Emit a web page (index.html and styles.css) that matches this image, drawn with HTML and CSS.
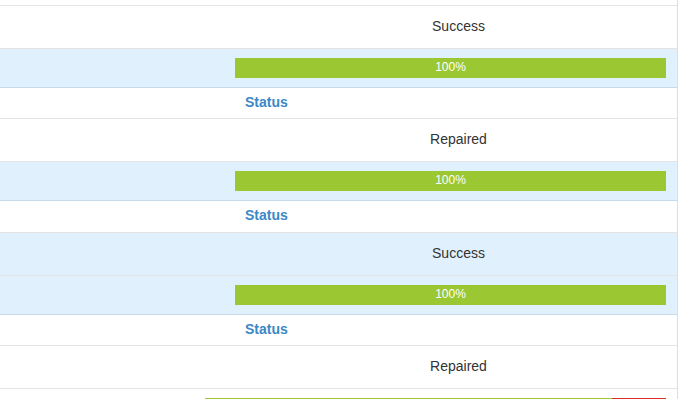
FILE: index.html
```html
<!DOCTYPE html>
<html lang="en">
<head>
    <meta charset="UTF-8">
    <meta name="viewport" content="width=device-width, initial-scale=1.0">
    <title>Repair Results</title>
    <link rel="stylesheet" href="styles.css">
</head>
<body>
    <div id="results">
        <div class="row status-row"></div>

        <div class="row result-row"><div></div><div class="result">Success</div></div>
        <div class="row bar-row"><div></div><div class="cell-bar"><div class="bar">100%</div></div></div>
        <div class="row status-row"><div></div><div class="status">Status</div></div>

        <div class="row result-row"><div></div><div class="result">Repaired</div></div>
        <div class="row bar-row"><div></div><div class="cell-bar"><div class="bar">100%</div></div></div>
        <div class="row status-row"><div></div><div class="status">Status</div></div>

        <div class="row result-row active"><div></div><div class="result">Success</div></div>
        <div class="row bar-row"><div></div><div class="cell-bar"><div class="bar">100%</div></div></div>
        <div class="row status-row"><div></div><div class="status">Status</div></div>

        <div class="row result-row"><div></div><div class="result">Repaired</div></div>
        <div class="total-row">
            <div class="stack">
                <div class="stack-ok" style="width: 88.3%"></div>
                <div class="stack-fail" style="width: 11.7%"></div>
            </div>
        </div>
    </div>
</body>
</html>
```

FILE: styles.css
```css
body {
    margin: 0;
    background-color: #fff;
    font-family: 'Liberation Sans', Arial, sans-serif;
    font-size: 14px;
    color: #333;
    overflow: hidden;
}

#results {
    width: 677px;
    border-right: 1px solid #dedede;
    margin-top: -25.33px;
    min-height: 430px;
}

.row {
    display: grid;
    grid-template-columns: 230px 1fr;
    box-sizing: border-box;
    border-bottom: 1px solid #e4e4e4;
}

.result-row {
    height: 43px;
}

.result-row.active {
    background-color: #e1f0fd;
}

.result {
    padding-left: 10px;
    text-align: center;
    line-height: 40px;
}

.bar-row {
    height: 39px;
    background-color: #e1f0fd;
    border-bottom-color: #c6dae9;
}

.cell-bar {
    padding: 9px 11px 0 5px;
}

.bar {
    height: 20px;
    line-height: 19px;
    background-color: #9bc732;
    color: #fff;
    font-size: 12px;
    text-align: center;
}

.status-row {
    height: 31.33px;
}

.status {
    padding-left: 15px;
    line-height: 28px;
    font-weight: bold;
    color: #3b88c6;
}

.total-row {
    padding: 9px 11px 0 205px;
}

.stack {
    display: flex;
    height: 20px;
}

.stack-ok {
    background-color: #9bc732;
}

.stack-fail {
    background-color: #d9302c;
}
```
